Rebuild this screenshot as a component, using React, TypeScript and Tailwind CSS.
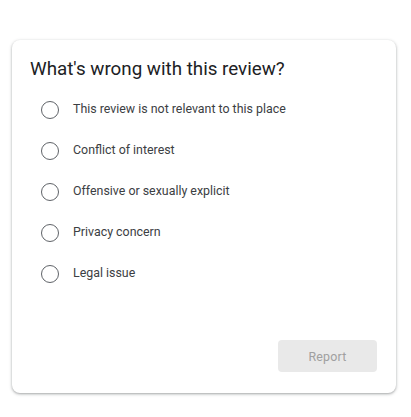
const reasons = [
  'This review is not relevant to this place',
  'Conflict of interest',
  'Offensive or sexually explicit',
  'Privacy concern',
  'Legal issue',
];

export default function App() {
  return (
    <div className="w-[411px] h-[417px] bg-white pt-[40px] pl-[12px] font-['Roboto',sans-serif]">
      <div className="w-[384px] h-[353px] rounded-[8px] bg-white shadow-[0_1px_2px_rgba(60,64,67,0.3),0_1px_3px_1px_rgba(60,64,67,0.15)] flex flex-col pt-[15px]">
        <h2 className="pl-[18px] text-[18.8px] leading-[28px] text-[#202124] font-normal">
          What's wrong with this review?
        </h2>
        <div className="mt-[6px] flex flex-col">
          {reasons.map((r) => (
            <label key={r} className="h-[41px] flex items-center pl-[29px] cursor-pointer">
              <span className="w-[18px] h-[18px] rounded-full border-[1.5px] border-[#5f6368] shrink-0" />
              <span className="ml-[14px] text-[12.4px] text-[#3c4043]">{r}</span>
            </label>
          ))}
        </div>
        <div className="flex-1" />
        <div className="flex justify-end pr-[19px] pb-[21px]">
          <button
            disabled
            className="w-[99px] h-[32px] rounded-[4px] bg-[#e9e9e9] text-[12.4px] text-[#a0a0a0] tracking-[0.2px] pt-[2px]"
          >
            Report
          </button>
        </div>
      </div>
    </div>
  );
}
